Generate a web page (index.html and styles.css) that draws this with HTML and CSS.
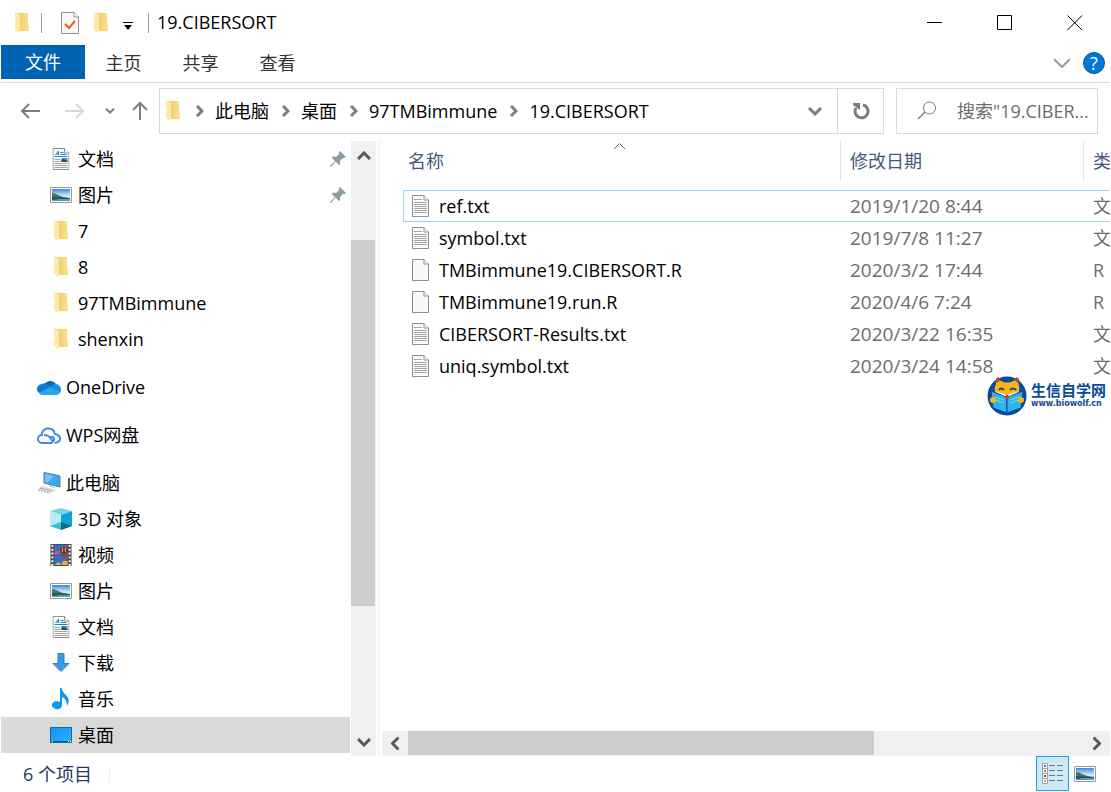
FILE: index.html
```html
<!DOCTYPE html>
<html lang="zh-CN">
<head>
    <meta charset="UTF-8">
    <meta name="viewport" content="width=device-width, initial-scale=1.0">
    <title>19.CIBERSORT</title>
    <link rel="stylesheet" href="styles.css">
</head>
<body>
<svg class="defs" aria-hidden="true">
    <defs>
        <linearGradient id="gFold" x1="0" y1="0" x2="1" y2="0">
            <stop offset="0" stop-color="#eac867"/>
            <stop offset="1" stop-color="#ffe08b"/>
        </linearGradient>
        <linearGradient id="gSky" x1="0" y1="0" x2="0" y2="1">
            <stop offset="0" stop-color="#3f85dc"/>
            <stop offset="0.6" stop-color="#d5ecfa"/>
            <stop offset="1" stop-color="#8fb9d4"/>
        </linearGradient>
        <linearGradient id="gBlue" x1="0" y1="0" x2="1" y2="1">
            <stop offset="0" stop-color="#1593ee"/>
            <stop offset="1" stop-color="#2fb0ff"/>
        </linearGradient>
        <symbol id="folder" viewBox="0 0 14 22">
            <path d="M1 1H13V12L14 13V19H1Z" fill="url(#gFold)"/>
            <path d="M0 0L5 3V19L4 21L0 18Z" fill="#ffe9a9"/>
        </symbol>
        <symbol id="page" viewBox="0 0 17 22">
            <path d="M.5 .5H12L16.500 5V21.500H.5Z" fill="#f8f9fa" stroke="#8d8f90"/>
            <path d="M12 .5V5H16.500" fill="#fff" stroke="#8d8f90"/>
        </symbol>
        <symbol id="text" viewBox="0 0 17 22">
            <use href="#page"/>
            <path d="M2 4.500H10M2 7.500H15M2 9.500H15M2 11.500H15M2 13.500H15M2 15.500H15M2 17.500H15" stroke="#a2a4a6"/>
        </symbol>
        <symbol id="doc" viewBox="0 0 17 22">
            <use href="#page"/>
            <path d="M3 7L6 3V7M4 6H6" stroke="#1789d1" fill="none"/>
            <path d="M8 4.500H11M8 6.500H14M2 8.500H15" stroke="#1789d1"/>
            <path d="M2 11.500H8M2 13.500H8M2 15.500H15M2 17.500H15M2 19.500H15" stroke="#a2a4a6"/>
            <path d="M9 10H15V14H9Z" fill="#4d8fc9"/>
            <path d="M9 12L11 11L15 13V14H9Z" fill="#23514b"/>
        </symbol>
        <symbol id="picture" viewBox="0 0 22 16">
            <path d="M.5 .5H21.500V15.500H.5Z" fill="#fff" stroke="#9a9a9a"/>
            <path d="M2 2H20V14H2Z" fill="url(#gSky)"/>
            <path d="M2 6Q5 6 8 8Q12 10 18 11H2Z" fill="#3f7a55"/>
            <path d="M2 11H20V14H2Z" fill="#5f9dc0"/>
            <path d="M2 10L20 11V12H10L2 13Z" fill="#24545f"/>
        </symbol>
        <symbol id="cloud" viewBox="0 0 24 16">
            <path d="M7 6A7 7 0 0 1 19 5L14 11L3 8Z" fill="#0b63b8"/>
            <path d="M1 13A5 5 0 0 1 5 5Q8 3 12 6L18 10L4 15Z" fill="#0f78d4"/>
            <path d="M13 9Q16 4 19 5Q24 6 24 11Q24 14 21 15Z" fill="#1490df"/>
            <path d="M2 14L13 8L23 13Q22 16 19 16H5Q3 16 2 14Z" fill="#28a8ea"/>
        </symbol>
        <symbol id="wps" viewBox="0 0 24 18">
            <path d="M15 17H5A4 4 0 0 1 5 9A6 6 0 0 1 5 7A7 7 0 0 1 17 5Q17 7 18 8Q23 9 23 13Q23 16 18 17M7 9Q12 9 14 13L16 16Q18 13 16 11Q14 10 12 12" fill="none" stroke="#4285f4" stroke-width="2"/>
        </symbol>
        <symbol id="pc" viewBox="0 0 24 22">
            <path d="M7 .5L23 4V15L7 11Z" fill="#3ca9f4" stroke="#5d7a90"/>
            <path d="M8 2L17 4L10 11L8 10Z" fill="#74c7fb"/>
            <path d="M0 17L6 14L19 18L14 21Z" fill="#dde0e3"/>
            <path d="M3 16L15 19M1 18L13 21M13 14L18 16" stroke="#8e979e" stroke-dasharray="2 1"/>
        </symbol>
        <symbol id="cube" viewBox="0 0 22 22">
            <path d="M11 0L22 3L11 7L0 3Z" fill="#75d6df"/>
            <path d="M0 3L11 7V22L0 18Z" fill="#b9ecee"/>
            <path d="M22 3L11 7V22L22 18Z" fill="#12a4d8"/>
            <path d="M0 18L11 14V22Z" fill="#31c3d3"/>
            <path d="M11 14L22 18L11 22Z" fill="#087083"/>
        </symbol>
        <symbol id="video" viewBox="0 0 22 23">
            <path d="M0 0H22V23H0Z" fill="#4a4a4a"/>
            <path d="M4 1H18V11H4ZM4 12H18V22H4Z" fill="#346fd0"/>
            <path d="M2 1V23M20 1V23" stroke="#fff" stroke-width="2" stroke-dasharray="2 2"/>
            <path d="M4 9L7 7L10 10V11H4Z" fill="#e2527b"/>
            <path d="M10 10L14 8L18 11H10Z" fill="#2f7a3c"/>
            <path d="M10 5Q14 1 18 5V8L15 10H13L10 7Z" fill="#7c2a18"/>
            <path d="M12 4H13V8H12ZM15 4H16V8H15Z" fill="#ffc928"/>
            <path d="M12 12H17L15 16H14Z" fill="#d72d1b"/>
            <path d="M12 19Q15 16 18 19V22H12Z" fill="#f1ae21"/>
            <path d="M5 21L8 19L11 21V22H5Z" fill="#e4bd33"/>
        </symbol>
        <symbol id="download" viewBox="0 0 18 20">
            <path d="M6 .5H12V10.500H17L9 18.500L1 10.500H6Z" fill="#3b99ea" stroke="#2d7fca"/>
        </symbol>
        <symbol id="music" viewBox="0 0 16 22">
            <path d="M7 0H9Q9 4 13 7Q18 12 14 18Q14 11 9 9V17A5 4 0 1 1 7 14Z" fill="#0c98f0"/>
        </symbol>
        <symbol id="desktop" viewBox="0 0 22 16">
            <path d="M.5 .5H21.500V15.500H.5Z" fill="url(#gBlue)" stroke="#1269ad"/>
            <path d="M1 14.500H21" stroke="#0b5c9b"/>
            <path d="M2 14.500H3M18 14.500H19M20 14.500H21" stroke="#fff"/>
        </symbol>
        <symbol id="pin" viewBox="0 0 16 16">
            <path d="M10 0L16 6L14 7L13 7L10 10L10 13L9 14L5.500 10.500L1 16L0 15L5 10L1.500 6.500L3 5.500L6 6L9 3L9 1Z" fill="#8d9ba4"/>
        </symbol>
        <symbol id="right" viewBox="0 0 8 12">
            <path d="M1 1L6 6L1 11" fill="none" stroke="#7c7c7c" stroke-width="3"/>
        </symbol>
        <symbol id="down" viewBox="0 0 14 9">
            <path d="M1 1L7 7L13 1" fill="none" stroke="currentColor" stroke-width="3"/>
        </symbol>
        <symbol id="arrow" viewBox="0 0 20 16">
            <path d="M20 8H2M9 1L2 8L9 15" fill="none" stroke="currentColor" stroke-width="2"/>
        </symbol>
    </defs>
</svg>

<header class="titlebar">
    <svg class="i-folder"><use href="#folder"/></svg>
    <span class="bar"></span>
    <button class="quick" aria-label="属性">
        <svg width="18" height="22" viewBox="0 0 18 22">
            <path d="M.5 .5H13L17.500 5V21.500H.5Z" fill="#f8f8f8" stroke="#8d8f90"/>
            <path d="M13 .5V5H17.500" fill="#fff" stroke="#8d8f90"/>
            <path d="M4 12L8 16L14 9" fill="none" stroke="#f0581c" stroke-width="2"/>
        </svg>
    </button>
    <button class="quick" aria-label="新建文件夹"><svg class="i-folder"><use href="#folder"/></svg></button>
    <button class="quick" aria-label="自定义快速访问工具栏">
        <svg class="custom" width="10" height="8" viewBox="0 0 10 8"><path d="M0 .5H10" stroke="#000"/><path d="M1 3H9L5 8Z"/></svg>
    </button>
    <span class="bar"></span>
    <h1>19.CIBERSORT</h1>
    <div class="winbtns">
        <button aria-label="最小化"><svg width="16" height="16"><path d="M0 7.500H15" stroke="#000"/></svg></button>
        <button aria-label="最大化"><svg width="16" height="16"><path d="M.5 .5H14.500V14.500H.5Z" stroke="#000" fill="none"/></svg></button>
        <button aria-label="关闭"><svg width="16" height="16"><path d="M.5 .5L15 15M15 .5L.5 15" stroke="#000"/></svg></button>
    </div>
</header>

<nav class="ribbon">
    <a class="file" href="#">文件</a>
    <a href="#">主页</a>
    <a href="#">共享</a>
    <a href="#">查看</a>
    <button class="expand" aria-label="展开功能区"><svg width="16" height="10"><path d="M0 1L8 9L16 1" stroke="#9a9a9a" stroke-width="2" fill="none"/></svg></button>
    <button class="help" aria-label="帮助">?</button>
</nav>

<div class="toolbar">
    <div class="moves">
        <button class="back" aria-label="后退"><svg width="20" height="16"><use href="#arrow"/></svg></button>
        <button class="next" aria-label="前进"><svg class="flip" width="20" height="16"><use href="#arrow"/></svg></button>
        <button class="recent" aria-label="最近浏览的位置"><svg width="10" height="6"><use href="#down"/></svg></button>
        <button class="up" aria-label="上移"><svg width="16" height="20" viewBox="0 0 16 20"><path d="M8 19V2M1 9L8 2L15 9" fill="none" stroke="currentColor" stroke-width="2"/></svg></button>
    </div>
    <div class="address">
        <svg class="i-folder"><use href="#folder"/></svg>
        <svg class="sep"><use href="#right"/></svg>
        <a href="#">此电脑</a>
        <svg class="sep"><use href="#right"/></svg>
        <a href="#">桌面</a>
        <svg class="sep"><use href="#right"/></svg>
        <a href="#">97TMBimmune</a>
        <svg class="sep"><use href="#right"/></svg>
        <a href="#">19.CIBERSORT</a>
        <button class="history" aria-label="以前的位置"><svg width="14" height="9"><use href="#down"/></svg></button>
        <button class="refresh" aria-label="刷新">
            <svg width="18" height="18" viewBox="0 0 18 18"><path d="M11 3A6.500 6.500 0 1 1 4 6" fill="none" stroke="#7c7c7c" stroke-width="3"/><path d="M1 1H8V8L5 6L1 3Z" fill="#7c7c7c"/></svg>
        </button>
    </div>
    <label class="search">
        <svg width="20" height="20" viewBox="0 0 20 20"><circle cx="12.500" cy="7" r="6" fill="none" stroke="#7c7c7c"/><path d="M8 11L1 18" stroke="#7c7c7c" stroke-width="1.500"/></svg>
        <input type="text" aria-label="搜索" placeholder="搜索&quot;19.CIBER...">
    </label>
</div>

<main>
    <nav class="tree">
        <a href="#"><svg class="ico i-page"><use href="#doc"/></svg>文档<svg class="pin"><use href="#pin"/></svg></a>
        <a href="#"><svg class="ico i-pic"><use href="#picture"/></svg>图片<svg class="pin"><use href="#pin"/></svg></a>
        <a href="#"><svg class="ico i-page"><use href="#folder"/></svg>7</a>
        <a href="#"><svg class="ico i-page"><use href="#folder"/></svg>8</a>
        <a href="#"><svg class="ico i-page"><use href="#folder"/></svg>97TMBimmune</a>
        <a href="#"><svg class="ico i-page"><use href="#folder"/></svg>shenxin</a>
        <a class="root" href="#"><svg class="ico i-pic"><use href="#cloud"/></svg>OneDrive</a>
        <a class="root" href="#"><svg class="ico i-wps"><use href="#wps"/></svg>WPS网盘</a>
        <a class="root" href="#"><svg class="ico i-page"><use href="#pc"/></svg>此电脑</a>
        <a href="#"><svg class="ico i-page"><use href="#cube"/></svg>3D 对象</a>
        <a href="#"><svg class="ico i-page"><use href="#video"/></svg>视频</a>
        <a href="#"><svg class="ico i-pic"><use href="#picture"/></svg>图片</a>
        <a href="#"><svg class="ico i-page"><use href="#doc"/></svg>文档</a>
        <a href="#"><svg class="ico i-down"><use href="#download"/></svg>下载</a>
        <a href="#"><svg class="ico i-page"><use href="#music"/></svg>音乐</a>
        <a class="selected" href="#"><svg class="ico i-pic"><use href="#desktop"/></svg>桌面</a>
    </nav>
    <div class="vscroll">
        <button aria-label="向上滚动"><svg class="turn" width="14" height="9"><use href="#down"/></svg></button>
        <div class="track"><div class="thumb"></div></div>
        <button aria-label="向下滚动"><svg width="14" height="9"><use href="#down"/></svg></button>
    </div>
    <section class="files">
        <div class="list">
            <table>
                <thead>
                <tr>
                    <th class="name"><span>名称</span><svg class="sort" width="11" height="6"><path d="M0 6L5.500 .5L11 6" fill="none" stroke="#6a6a6a"/></svg></th>
                    <th class="date"><span>修改日期</span></th>
                    <th class="type"><span>类</span></th>
                </tr>
                </thead>
                <tbody>
                <tr class="focus">
                    <td><svg class="fi"><use href="#text"/></svg>ref.txt</td>
                    <td class="date">2019/1/20 8:44</td>
                    <td class="type">文</td>
                </tr>
                <tr>
                    <td><svg class="fi"><use href="#text"/></svg>symbol.txt</td>
                    <td class="date">2019/7/8 11:27</td>
                    <td class="type">文</td>
                </tr>
                <tr>
                    <td><svg class="fi"><use href="#page"/></svg>TMBimmune19.CIBERSORT.R</td>
                    <td class="date">2020/3/2 17:44</td>
                    <td class="type">R</td>
                </tr>
                <tr>
                    <td><svg class="fi"><use href="#page"/></svg>TMBimmune19.run.R</td>
                    <td class="date">2020/4/6 7:24</td>
                    <td class="type">R</td>
                </tr>
                <tr>
                    <td><svg class="fi"><use href="#text"/></svg>CIBERSORT-Results.txt</td>
                    <td class="date">2020/3/22 16:35</td>
                    <td class="type">文</td>
                </tr>
                <tr>
                    <td><svg class="fi"><use href="#text"/></svg>uniq.symbol.txt</td>
                    <td class="date">2020/3/24 14:58</td>
                    <td class="type">文</td>
                </tr>
                </tbody>
            </table>
            <div class="brand">
                <svg width="40" height="42" viewBox="0 0 40 42">
                    <circle cx="20" cy="21" r="19.500" fill="#0b4a9b"/>
                    <path d="M10 3L17 7H23L31 3L33 14L31 22L20 27L9 22L7 14Z" fill="#fbb416" stroke="#0b4a9b"/>
                    <path d="M11 2L14 5L10 8ZM30 2L27 5L31 8Z" fill="#e8262a"/>
                    <path d="M12 15Q14 12 17 15M23 15Q26 12 29 15" fill="none" stroke="#0b4a9b" stroke-width="2"/>
                    <path d="M4 16L20 22V38L6 33Z" fill="#2cb5e8" stroke="#0b4a9b"/>
                    <path d="M36 16L20 22V38L34 33Z" fill="#2cb5e8" stroke="#0b4a9b"/>
                    <path d="M7 16L20 20L33 16L20 22Z" fill="#fff"/>
                    <path d="M8 22L17 25M8 25L17 28M32 22L23 25M32 25L23 28" stroke="#7ad6f5"/>
                    <circle cx="20" cy="22" r="2" fill="#e8262a"/>
                    <circle cx="6" cy="25" r="3" fill="#fbb416"/>
                    <circle cx="34" cy="25" r="3" fill="#fbb416"/>
                </svg>
                <div>
                    <strong>生信自学网</strong>
                    <small>www.biowolf.cn</small>
                </div>
            </div>
        </div>
        <div class="hscroll">
            <button aria-label="向左滚动"><svg class="left" width="14" height="9"><use href="#down"/></svg></button>
            <div class="track"><div class="thumb"></div></div>
            <button aria-label="向右滚动"><svg class="flat" width="14" height="9"><use href="#down"/></svg></button>
        </div>
    </section>
</main>

<footer>
    <span class="count">6 个项目</span>
    <button class="view on" aria-label="详细信息">
        <svg width="22" height="22" viewBox="0 0 22 22">
            <path d="M.5 .5H5.500V20.500H.5ZM.5 5.500H5.500M.5 10.500H5.500M.5 15.500H5.500" fill="#fff" stroke="#a0a0a0"/>
            <path d="M2 3H4" stroke="#3a7bb0" stroke-width="2"/>
            <path d="M2 8H4" stroke="#8a8a30" stroke-width="2"/>
            <path d="M2 13H4" stroke="#c5301c" stroke-width="2"/>
            <path d="M2 18H4" stroke="#9ab88d" stroke-width="2"/>
            <path d="M7 2.500H13M15 2.500H21M7 7.500H13M15 7.500H21M7 12.500H13M15 12.500H21M7 17.500H13M15 17.500H21" stroke="#6e7478"/>
        </svg>
    </button>
    <button class="view" aria-label="大缩略图"><svg width="22" height="16"><use href="#picture"/></svg></button>
</footer>
</body>
</html>
```
FILE: styles.css
```css
* {
    box-sizing: border-box;
}

body {
    display: flex;
    flex-direction: column;
    height: 100vh;
    margin: 0;
    padding: 0 1px;
    overflow: hidden;
    background: #fff;
    color: #000;
    font: 18px/24px "Open Sans", "Noto Sans CJK SC", sans-serif;
}

a {
    color: inherit;
    text-decoration: none;
}

button {
    display: flex;
    align-items: center;
    justify-content: center;
    padding: 0;
    border: 0;
    background: none;
    color: inherit;
    font: inherit;
}

svg {
    flex: none;
}

.defs {
    position: absolute;
    width: 0;
    height: 0;
}

.i-folder {
    width: 14px;
    height: 22px;
}

/* title bar */
.titlebar {
    display: flex;
    align-items: center;
    flex: none;
    height: 45px;
    padding-left: 14px;
}

.bar {
    width: 1px;
    height: 20px;
    margin-left: 12px;
    background: #a0a0a0;
}

.quick {
    margin-left: 15px;
}

.bar + .quick {
    margin-left: 19px;
}

.custom {
    margin-top: 6px;
}

.quick + .bar {
    margin-left: 15px;
}

h1 {
    margin: 0 0 2px 8px;
    font-size: 18px;
    font-weight: normal;
}

.winbtns {
    display: flex;
    margin-left: auto;
}

.winbtns button {
    width: 70px;
    height: 44px;
}

/* ribbon tabs */
.ribbon {
    display: flex;
    align-items: center;
    flex: none;
    height: 38px;
    padding: 0 5px 2px 0;
    border-bottom: 1px solid #d9dadb;
    color: #333;
}

.ribbon a {
    width: 77px;
    text-align: center;
}

.ribbon .file {
    width: 84px;
    height: 34px;
    margin-bottom: 1px;
    line-height: 34px;
    color: #fff;
    background: #0063b1;
}

.expand {
    margin-left: auto;
}

.help {
    width: 22px;
    height: 22px;
    margin-left: 13px;
    border: 1px solid #005a9e;
    border-radius: 50%;
    background: #0078d7;
    color: #fff;
    font-size: 18px;
}

/* navigation buttons, address and search */
.toolbar {
    display: flex;
    align-items: center;
    flex: none;
    height: 58px;
    padding: 0 12px 2px 0;
}

.moves {
    display: flex;
    align-items: center;
    width: 158px;
    padding-left: 19px;
    color: #7c7c7c;
}

.next {
    margin-left: 25px;
    color: #d9d9d9;
}

.recent {
    margin-left: 20px;
}

.up {
    margin-left: 17px;
}

.flip {
    transform: scaleX(-1);
}

.address {
    display: flex;
    align-items: center;
    flex: 1;
    height: 46px;
    padding-left: 6px;
    border: 1px solid #d9d9d9;
    white-space: nowrap;
}

.sep {
    width: 8px;
    height: 12px;
    margin: 0 11px 0 13px;
}

.i-folder + .sep {
    margin-left: 16px;
}

.history {
    width: 44px;
    margin-left: auto;
    color: #7c7c7c;
}

.refresh {
    width: 46px;
    height: 44px;
    border-left: 1px solid #d9d9d9;
}

.search {
    display: flex;
    align-items: center;
    width: 202px;
    height: 46px;
    margin-left: 12px;
    padding-left: 20px;
    border: 1px solid #d9d9d9;
}

.search input {
    flex: 1;
    min-width: 0;
    margin-left: 20px;
    padding: 0;
    border: 0;
    outline: 0;
    font: inherit;
}

.search input::placeholder {
    color: #6d6d6d;
    opacity: 1;
}

main {
    display: flex;
    flex: 1;
    min-height: 0;
}

/* folder tree */
.tree {
    width: 349px;
    margin-right: 1px;
    overflow: hidden;
}

.tree a {
    display: flex;
    align-items: center;
    height: 36px;
    padding: 0 4px 0 49px;
}

.tree .root {
    margin-top: 12px;
    padding-left: 36px;
}

.tree .selected {
    background: #d9d9d9;
}

.ico {
    width: 22px;
    margin-right: 6px;
}

.root .ico {
    width: 24px;
    margin-right: 5px;
}

.i-page {
    height: 22px;
}

.i-pic {
    height: 16px;
}

.i-wps {
    height: 18px;
}

.i-down {
    height: 20px;
}

.pin {
    width: 16px;
    height: 16px;
    margin-left: auto;
}

/* scroll bars */
.vscroll {
    display: flex;
    flex-direction: column;
    width: 25px;
    background: #f0f0f0;
    color: #5a5a5a;
}

.vscroll button {
    height: 28px;
}

.track {
    flex: 1;
}

.thumb {
    background: #cdcdcd;
}

.vscroll .track {
    padding-top: 71px;
}

.vscroll .thumb {
    width: 24px;
    height: 75%;
}

.turn {
    transform: rotate(180deg);
}

.left {
    transform: rotate(90deg);
}

.flat {
    transform: rotate(-90deg);
}

.hscroll {
    display: flex;
    height: 25px;
    margin-left: 2px;
    background: #f0f0f0;
    color: #5a5a5a;
}

.hscroll button {
    width: 26px;
}

.hscroll .thumb {
    width: 69%;
    height: 24px;
}

/* file list */
.files {
    display: flex;
    flex-direction: column;
    flex: 1;
    min-width: 0;
    margin-left: 2px;
    border-left: 2px solid #f5f5f5;
}

.list {
    position: relative;
    flex: 1;
    padding-left: 23px;
    overflow: hidden;
}

table {
    width: 810px;
    table-layout: fixed;
    border-collapse: collapse;
}

th,
td {
    padding: 0;
    text-align: left;
    font-weight: normal;
    white-space: nowrap;
}

th {
    position: relative;
    height: 49px;
    color: #44587c;
    vertical-align: top;
}

th span {
    display: block;
    height: 40px;
    padding-left: 9px;
    border-left: 1px solid #e5e5e5;
    line-height: 40px;
}

th.name {
    width: 437px;
}

th.name span {
    padding-left: 4px;
    border-left-color: transparent;
}

th.date {
    width: 243px;
}

.sort {
    position: absolute;
    top: 2px;
    left: 50%;
    margin-left: -8px;
}

td {
    height: 32px;
    padding-left: 9px;
}

td.date,
td.type {
    padding-left: 10px;
    color: #6d6d6d;
}

td.date {
    font-size: 19px;
}

.focus {
    outline: 1px solid #99d1ff;
    outline-offset: -1px;
}

.fi {
    width: 17px;
    height: 22px;
    margin: 1px 10px 0 0;
    vertical-align: top;
}

.brand {
    display: flex;
    position: absolute;
    top: 234px;
    right: 4px;
    gap: 4px;
    color: #0b4a9b;
}

.brand strong,
.brand small {
    display: block;
}

.brand strong {
    margin-top: 6px;
    font-size: 15px;
    line-height: 18px;
}

.brand small {
    font: bold 8px/10px "DejaVu Sans", sans-serif;
}

/* status bar */
footer {
    display: flex;
    align-items: center;
    flex: none;
    height: 36px;
    padding: 0 9px 1px 22px;
    color: #1f3864;
}

.count {
    margin-right: auto;
    padding-right: 17px;
    border-right: 1px solid #f0f0f0;
    line-height: 18px;
}

.view {
    width: 32px;
    height: 34px;
}

.view.on {
    width: 33px;
    height: 35px;
    border: 1px solid #26a0da;
    background: #cce8f6;
}
```
